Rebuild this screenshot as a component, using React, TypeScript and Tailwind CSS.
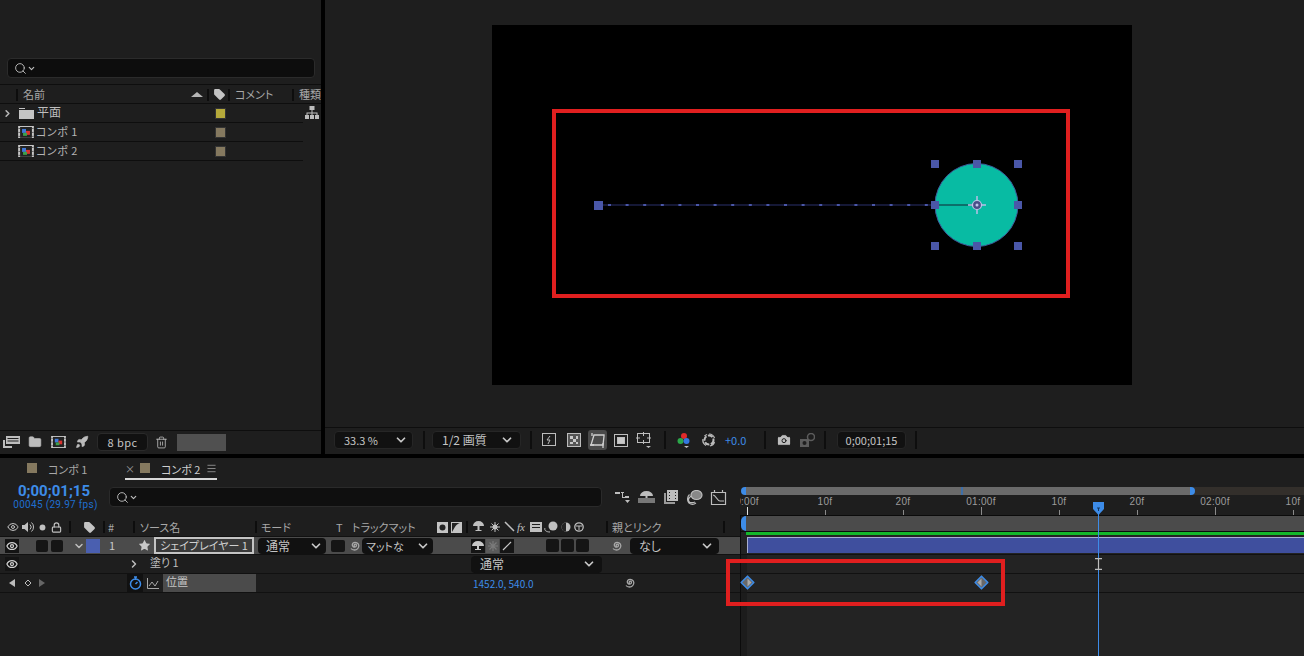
import React from 'react';
import { ChevronDown, ChevronRight, Search, Star, Trash2, Folder, Rocket, Camera, Eye, Lock, Tag, Circle, Menu } from 'lucide-react';

const FONT = '"Noto Sans CJK JP", "Noto Sans", sans-serif';

const Sep = ({ className = '' }: { className?: string }) => (
  <div className={`w-[2px] h-[12px] bg-[#0d0d0d] shrink-0 ${className}`} />
);

const CompIcon = ({ size = 16 }: { size?: number }) => (
  <svg width={size} height={size * 0.8} viewBox="0 0 16 13" className="shrink-0">
    <rect width="16" height="13" fill="#c8c8c8" />
    <rect x="2" y="1" width="12" height="11" fill="#222" />
    <rect x="0.5" y="2" width="1" height="1" fill="#222" />
    <rect x="0.5" y="6" width="1" height="1" fill="#222" />
    <rect x="0.5" y="10" width="1" height="1" fill="#222" />
    <rect x="14.5" y="2" width="1" height="1" fill="#222" />
    <rect x="14.5" y="6" width="1" height="1" fill="#222" />
    <rect x="14.5" y="10" width="1" height="1" fill="#222" />
    <rect x="4" y="3" width="4" height="4" fill="#3f78d8" />
    <rect x="8" y="5" width="4" height="4" fill="#d8322e" />
    <rect x="5" y="7" width="4" height="3" fill="#3fa04a" />
  </svg>
);

const Spiral = ({ className = '' }: { className?: string }) => (
  <svg width="14" height="14" viewBox="0 0 14 14" fill="none" stroke="#a8a8a8" strokeWidth="1.3" className={`shrink-0 ${className}`}>
    <path d="M7 7.5a1.2 1.2 0 1 1 1.5-1.2c0 1.6-2 2.4-3.3 1.5C3.8 6.800 4 4.500 5.800 3.700 7.800 2.900 10.500 4 10.800 6.300c.3 2.600-1.800 4.700-4.300 4.700-1.500 0-2.800-.5-3.500-1.500" />
  </svg>
);

const Dropdown = ({ label, className = '', textClass = '' }: { label: string; className?: string; textClass?: string }) => (
  <div className={`flex items-center justify-between bg-[#111111] rounded-[4px] shrink-0 ${className}`}>
    <span className={`text-[12px] leading-[14px] text-[#c4c4c4] whitespace-nowrap ${textClass}`}>{label}</span>
    <ChevronDown size={14} strokeWidth={3} className="text-[#c8c8c8] shrink-0" />
  </div>
);

const ToolDivider = () => <div className="w-[2px] h-[18px] bg-[#0e0e0e] shrink-0" />;

const FlatSquare = ({ color, className = '' }: { color: string; className?: string }) => (
  <div className={`w-[11px] h-[11px] border border-[#333] shrink-0 ${className}`} style={{ backgroundColor: color }} />
);

const ProjectRow = ({ name, color, folder }: { name: string; color: string; folder?: boolean }) => (
  <div className="relative flex items-center h-[19px] w-[303px] border-b border-[#0e0e0e]">
    {folder ? (
      <>
        <ChevronRight size={11} strokeWidth={3.5} className="text-[#b5b5b5] ml-[2px] shrink-0" />
        <svg width="15" height="11" viewBox="0 0 15 11" className="ml-[6px] shrink-0">
          <path d="M0 0h6v1H0zM0 2h15v9H0z" fill="#c4c4c4" />
        </svg>
        <span className="ml-[3px] mb-[2px] text-[12px] leading-[14px] text-[#bdbdbd]">{name}</span>
      </>
    ) : (
      <>
        <div className="ml-[18px] shrink-0"><CompIcon /></div>
        <span className="ml-[2px] mb-[2px] text-[11px] leading-[14px] text-[#b5b5b5] tracking-[0.5px]">{name}</span>
      </>
    )}
    <FlatSquare color={color} className="absolute left-[215px] top-[4px]" />
  </div>
);

const ProjectPanel = () => (
  <div className="w-[321px] shrink-0 bg-[#1e1e1e] flex flex-col h-full">
    <div className="mt-[58px] mx-[7px] w-[308px] h-[20px] bg-[#0d0d0d] rounded-[4px] border border-[#2b2b2b] flex items-center pl-[6px] text-[#c0c0c0]">
      <Search size={13} strokeWidth={1.700} />
      <ChevronDown size={9} strokeWidth={3} />
    </div>
    <div className="mt-[6px] border-t border-[#0e0e0e] border-b h-[20px] flex items-center text-[11px] text-[#a8a8a8] overflow-hidden w-[321px] pt-[1px]">
      <Sep className="ml-[16px]" />
      <span className="ml-[5px] w-[171px]">名前</span>
      <svg width="12" height="5" viewBox="0 0 12 5" className="shrink-0"><path d="M6 0l6 5H0z" fill="#b5b5b5" /></svg>
      <Sep className="ml-[4px]" />
      <Tag size={13} strokeWidth={0} fill="#c4c4c4" className="ml-[4px] shrink-0" />
      <Sep className="ml-[2px]" />
      <span className="ml-[5px] w-[58px] whitespace-nowrap">コメント</span>
      <Sep />
      <span className="ml-[5px] whitespace-nowrap">種類</span>
    </div>
    <div className="relative">
      <ProjectRow name="平面" color="#b5a93a" folder />
      <ProjectRow name="コンポ 1" color="#85795f" />
      <ProjectRow name="コンポ 2" color="#85795f" />
      <svg width="14" height="13" viewBox="0 0 14 13" className="absolute left-[305px] top-[2px]" fill="#bdbdbd">
        <rect x="4.500" y="0" width="5" height="4" />
        <rect x="0" y="9" width="4" height="4" />
        <rect x="5" y="9" width="4" height="4" />
        <rect x="10" y="9" width="4" height="4" />
        <path d="M6.500 4h1v2.500H12.500V9h-1V7.500H7.500V9h-1V7.500H2.500V9h-1V6.500H6.500z" />
      </svg>
    </div>
    <div className="mt-auto mb-[2px] h-[22px] flex items-center border-t border-[#0e0e0e] text-[#c0c0c0] pt-[1px]">
      <svg width="17" height="12" viewBox="0 0 17 12" className="ml-[3px] shrink-0" fill="#bdbdbd">
        <path d="M3 0h14v8H3zM4.500 2v1h11V2zM4.500 4.500v1h11v-1zM0 4h2v6h7v2H0z" fillRule="evenodd" />
      </svg>
      <Folder size={14} fill="#bdbdbd" strokeWidth={1} className="ml-[8px]" />
      <div className="ml-[9px]"><CompIcon size={15} /></div>
      <Rocket size={14} fill="#bdbdbd" strokeWidth={1} className="ml-[9px]" />
      <div className="ml-[8px] w-[51px] h-[18px] bg-[#111111] border border-[#2a2a2a] rounded-[4px] flex items-center justify-center text-[11px] text-[#c4c4c4] tracking-[0.4px]">8 bpc</div>
      <Trash2 size={13} strokeWidth={1.5} className="ml-[7px]" />
      <div className="ml-[9px] w-[49px] h-[17px] bg-[#505050]" />
    </div>
  </div>
);

const CompCanvas = () => (
  <div className="relative w-[640px] h-[360px] bg-black">
    <svg width="640" height="360" viewBox="0 0 640 360" className="absolute inset-0">
      <line x1="106" y1="180" x2="443" y2="180" stroke="#1d2148" strokeWidth="1.500" />
      {Array.from({ length: 21 }, (_, i) => (
        <rect key={i} x={116 + i * 17.6} y={179} width="3" height="2" fill="#4a57a8" />
      ))}
      <circle cx="484.500" cy="180" r="41.500" fill="#08bba3" stroke="#3d5a9a" strokeWidth="1" />
      <line x1="443" y1="180" x2="485" y2="180" stroke="#0c6f6a" strokeWidth="2" />
      {[
        [443, 139], [485, 139], [526, 139],
        [443, 180], [526, 180],
        [443, 221], [485, 221], [526, 221],
      ].map(([x, y]) => (
        <rect key={`${x}-${y}`} x={x - 4} y={y - 4} width="8" height="8" fill="#4a57a8" />
      ))}
      <rect x="102" y="176" width="9" height="9" fill="#4a57a8" />
      <path d="M485 171v18M476 180h18" stroke="#b8c0e8" strokeWidth="1.500" />
      <circle cx="485" cy="180" r="4.500" fill="#4a4f88" stroke="#c0c6ea" strokeWidth="1.200" />
      <circle cx="485" cy="180" r="1.500" fill="#c0c6ea" />
    </svg>
    <div className="absolute left-[60px] top-[84px] w-[518px] h-[189px] border-[4px] border-[#e01f1f]" />
  </div>
);

const ViewerToolbar = () => (
  <div className="h-[25px] flex items-center pl-[9px] border-t border-[#0e0e0e] text-[#c0c0c0] mb-[2px]">
    <Dropdown label="33.3 %" className="w-[79px] h-[18px] pl-[9px] pr-[4px] border border-[#262626]" textClass="text-[#a9c4e4] !text-[11px]" />
    <div className="ml-[10px]"><ToolDivider /></div>
    <Dropdown label="1/2 画質" className="ml-[7px] w-[89px] h-[18px] pl-[9px] pr-[6px] border border-[#262626]" />
    <div className="ml-[9px]"><ToolDivider /></div>
    <svg width="14" height="14" viewBox="0 0 14 14" className="ml-[10px] shrink-0" fill="none" stroke="#bdbdbd">
      <rect x="0.500" y="0.500" width="13" height="12" />
      <path d="M8 3L5 7h3l-2 4" />
    </svg>
    <svg width="14" height="14" viewBox="0 0 14 14" className="ml-[11px] shrink-0" stroke="#bdbdbd">
      <rect x="0.500" y="0.500" width="13" height="13" fill="#555" />
      <path d="M3 3h3v3H3zM9 3h2v3H9zM6 6h3v3H6zM3 9h3v2H3zM9 9h2v2H9z" fill="#c8c8c8" stroke="none" />
    </svg>
    <div className="ml-[7px] w-[19px] h-[20px] bg-[#4a4a4a] rounded-[3px] flex items-center justify-center">
      <svg width="15" height="15" viewBox="0 0 15 15" fill="none" stroke="#d0d0d0" strokeWidth="1.300">
        <path d="M4 2h10v1l-1 9H1z" />
        <path d="M2 0v3M0 12h4M13 10v5" />
      </svg>
    </div>
    <svg width="14" height="13" viewBox="0 0 14 13" className="ml-[7px] shrink-0" fill="none" stroke="#bdbdbd">
      <rect x="0.500" y="0.500" width="13" height="12" />
      <rect x="3.500" y="3.500" width="7" height="6" fill="#c8c8c8" />
    </svg>
    <svg width="16" height="16" viewBox="0 0 16 16" className="ml-[8px] shrink-0" fill="none" stroke="#bdbdbd">
      <rect x="1.500" y="1.500" width="12" height="9" />
      <path d="M7.500 0v4M7.500 8v4M0 6h4M11 6h4" />
      <path d="M10 14h5l-2.500 2z" fill="#bdbdbd" stroke="none" />
    </svg>
    <div className="ml-[12px]"><ToolDivider /></div>
    <svg width="14" height="16" viewBox="0 0 14 16" className="ml-[11px] shrink-0">
      <circle cx="7" cy="4" r="3" fill="#e02a2a" />
      <circle cx="3.500" cy="9" r="3" fill="#2ba84a" />
      <circle cx="9.500" cy="9" r="3" fill="#3378e0" />
      <path d="M7 14h5l-2.500 2z" fill="#bdbdbd" />
    </svg>
    <svg width="14" height="14" viewBox="0 0 14 14" className="ml-[11px] shrink-0" fill="none" stroke="#bdbdbd" strokeWidth="2">
      <circle cx="7" cy="7" r="4.500" strokeDasharray="5 1.500" />
      <path d="M7 1a6 6 0 0 1 5.500 4M12.500 9A6 6 0 0 1 8 13M4 12.500A6 6 0 0 1 1 6M2.500 3A6 6 0 0 1 5 1.500" strokeWidth="1.200" />
    </svg>
    <span className="ml-[9px] text-[11px] leading-none text-[#3d8ce8] w-[22px]">+0.0</span>
    <div className="ml-[17px]"><ToolDivider /></div>
    <Camera size={16} fill="#bdbdbd" stroke="#1e1e1e" strokeWidth={1.500} className="ml-[10px] shrink-0" />
    <svg width="15" height="14" viewBox="0 0 15 14" className="ml-[8px] shrink-0" fill="#5c5c5c">
      <path d="M0 6h9v8H0z" />
      <circle cx="4.500" cy="10" r="2" fill="#1e1e1e" />
      <circle cx="11" cy="4" r="3.500" fill="none" stroke="#5c5c5c" strokeWidth="1.500" />
    </svg>
    <div className="ml-[9px]"><ToolDivider /></div>
    <div className="ml-[11px] w-[69px] h-[18px] bg-[#111111] border border-[#262626] rounded-[4px] flex items-center justify-center text-[11px] leading-none text-[#c4c4c4]">0;00;01;15</div>
    <div className="ml-[9px]"><ToolDivider /></div>
  </div>
);

const Viewer = () => (
  <div className="flex-1 bg-[#1e1e1e] flex flex-col h-full">
    <div className="flex-1 pt-[25px] pl-[167px]">
      <CompCanvas />
    </div>
    <ViewerToolbar />
  </div>
);

const Tabs = () => (
  <div className="h-[25px] flex items-start text-[11px] leading-[14px] text-[#a8a8a8]">
    <div className="ml-[27px] mt-[5px] w-[10px] h-[10px] bg-[#85795f] shrink-0" />
    <span className="ml-[11px] mt-[4px] w-[37px] shrink-0 whitespace-nowrap">コンポ 1</span>
    <div className="ml-[40px] w-[92px] h-[22px] border-b-2 border-[#d8d8d8] flex items-start shrink-0">
      <span className="mt-[4px] w-[15px] shrink-0 text-[10px] text-[#9a9a9a]">×</span>
      <div className="mt-[5px] w-[10px] h-[10px] bg-[#85795f] shrink-0" />
      <span className="ml-[11px] mt-[4px] w-[37px] shrink-0 text-[#cfcfcf] whitespace-nowrap">コンポ 2</span>
      <Menu size={11} strokeWidth={1.500} className="ml-[8px] mt-[5px] text-[#b5b5b5] shrink-0" />
    </div>
  </div>
);

const TimeSearch = () => (
  <div className="h-[30px] flex items-start">
    <div className="w-[109px] flex flex-col items-center font-['Roboto']">
      <span className="text-[15px] leading-[16px] font-bold text-[#3d8ce8] ml-[-1px]">0;00;01;15</span>
      <span className="text-[10px] leading-[11px] text-[#1f6fd0] tracking-[0.3px] whitespace-nowrap ml-[2px]">00045 (29.97 fps)</span>
    </div>
    <div className="mt-[4px] w-[493px] h-[20px] bg-[#0f0f0f] border border-[#2a2a2a] rounded-[4px] flex items-center pl-[6px] text-[#c0c0c0]">
      <Search size={13} strokeWidth={1.700} />
      <ChevronDown size={9} strokeWidth={3} />
    </div>
    <svg width="15" height="12" viewBox="0 0 15 12" className="ml-[13px] mt-[8px] shrink-0" fill="#bdbdbd">
      <path d="M0 1h5v2H0zM6 1h3v1H8v4h2V5h4v2h-4V7H7V2H6zM10 9h5l-2.500 3z" />
    </svg>
    <svg width="17" height="12" viewBox="0 0 17 12" className="ml-[8px] mt-[8px] shrink-0" fill="#bdbdbd">
      <path d="M2 5a6.500 5 0 0 1 13 0H9.500v2h-2V5z" />
      <rect x="0" y="7" width="17" height="5" fill="#777" />
    </svg>
    <svg width="15" height="15" viewBox="0 0 15 15" className="ml-[8px] mt-[7px] shrink-0" fill="#bdbdbd">
      <path d="M4 0h11v11H4zM6 2v1h1V2zM6 5v1h1V5zM6 8v1h1V8zM12 2v1h1V2zM12 5v1h1V5zM12 8v1h1V8z" fillRule="evenodd" />
      <path d="M1 3h2v9h9v2H1z" fill="#9a9a9a" />
    </svg>
    <svg width="16" height="15" viewBox="0 0 16 15" className="ml-[9px] mt-[7px] shrink-0" fill="none" stroke="#bdbdbd" strokeWidth="1.200">
      <ellipse cx="9.500" cy="5" rx="5.500" ry="4.500" fill="#888" />
      <path d="M4 6c-2.500 2-3 4-2 5.500 1 1.500 4 1.500 6 .5M2.500 4.500C0 7 0 11 2 13c2 1.500 5 1.500 7 0" />
    </svg>
    <svg width="17" height="15" viewBox="0 0 17 15" className="ml-[7px] mt-[7px] shrink-0" fill="none" stroke="#bdbdbd" strokeWidth="1.200">
      <path d="M1.500 2.500h14v12h-14zM4.500 0v3M12.500 0v3" />
      <path d="M3 5c3 0 4 6 7 6h4" />
    </svg>
  </div>
);

const Ruler = () => {
  const labels = [
    { x: 0, t: '0:00f' }, { x: 78, t: '10f' }, { x: 156, t: '20f' }, { x: 234, t: '01:00f' },
    { x: 312, t: '10f' }, { x: 390, t: '20f' }, { x: 468, t: '02:00f' }, { x: 546, t: '10f' },
  ];
  return (
    <svg width="564" height="20" viewBox="0 0 564 20" className="block">
      {labels.map((l, i) => (
        <g key={l.x}>
          <text x={l.x + 7} y="10" textAnchor="middle" fontSize="10" fill="#9c9c9c" fontFamily='"Liberation Sans", sans-serif' letterSpacing="0.3">{l.t}</text>
          <rect x={l.x + 7} y={i === 0 || i % 3 === 0 ? 12 : 15} width="1" height={i === 0 || i % 3 === 0 ? 8 : 5} fill={i === 0 ? '#e0e0e0' : '#8a8a8a'} />
        </g>
      ))}
    </svg>
  );
};

const Diamond = ({ flip, className = '' }: { flip?: boolean; className?: string }) => (
  <svg width="15" height="15" viewBox="0 0 15 15" className={`absolute top-[1px] z-10 ${className}`}>
    <path d="M7.500 1.200l6.300 6.300-6.300 6.300-6.300-6.300z" fill="#686868" stroke="#3d8ce8" strokeWidth="1.600" strokeLinejoin="round" />
    {flip ? <path d="M7.500 3.500l-4 4 4 4z" fill="#a8a8a8" /> : <path d="M7.500 3.500l4 4-4 4z" fill="#a8a8a8" />}
  </svg>
);

const TimelineRight = () => (
  <div className="relative flex-1 h-full overflow-hidden bg-[#232323] flex flex-col">
    <div className="h-[29px] bg-[#1e1e1e] shrink-0" />
    <div className="relative h-[8px] bg-[#1e1e1e] flex pl-[6px] shrink-0">
      <div className="w-[444px] bg-[#6a6a6a]" />
      <div className="flex-1 bg-[#332f2b]" />
      <div className="absolute left-[1px] top-0 w-[5px] h-[8px] bg-[#3d8ce8] rounded-l-full" />
      <div className="absolute left-[450px] top-0 w-[5px] h-[8px] bg-[#3d8ce8] rounded-r-full" />
      <div className="absolute left-[221px] top-0 w-[2px] h-[8px] bg-[#3f6fa8]" />
    </div>
    <div className="h-[21px] bg-[#1e1e1e] border-b border-[#0b0b0b] shrink-0">
      <Ruler />
    </div>
    <div className="relative h-[15px] bg-[#1e1e1e] pl-[6px] shrink-0">
      <div className="h-full bg-[#4b4b4b]" />
      <div className="absolute left-[1px] top-0 w-[5px] h-[15px] bg-[#3d8ce8] rounded-l-full" />
    </div>
    <div className="h-[1px] bg-[#0b0b0b] shrink-0" />
    <div className="h-[3px] ml-[6px] bg-[#13b82a] shrink-0" />
    <div className="h-[20px] border-b border-[#111] pl-[7px] pt-[2px] shrink-0">
      <div className="h-[16px] bg-[#3f4f9e] border-t border-l border-[#a8aed0]" />
    </div>
    <div className="h-[19px] border-b border-[#111] shrink-0" />
    <div className="relative h-[19px] border-b border-[#111] shrink-0">
      <Diamond className="left-[0px]" />
      <Diamond flip className="left-[234px]" />
    </div>
    <div className="absolute left-0 top-[58px] bottom-0 w-[1px] bg-[#0b0b0b]" />
    <div className="absolute left-[1px] top-[97px] bottom-0 w-[6px] bg-[#1a1a1a]/70" />
    <div className="absolute left-[358px] top-[52px] bottom-0 w-[1px] bg-[#3d8ce8]" />
    <svg width="11" height="13" viewBox="0 0 11 13" className="absolute left-[353px] top-[44px]">
      <path d="M0 0h11v7l-5.500 6L0 7z" fill="#3d8ce8" />
      <path d="M4 6h3M5.500 6v3" stroke="#12365f" />
    </svg>
    <svg width="7" height="12" viewBox="0 0 7 12" className="absolute left-[355px] top-[100px]" fill="none" stroke="#bdbdbd" strokeWidth="1.200">
      <path d="M0 .6h7M0 11.400h7M3.500 .6v10.800" />
    </svg>
  </div>
);

const HeaderCells = () => (
  <div className="h-[18px] flex items-center text-[11px] text-[#a8a8a8] whitespace-nowrap">
    <Eye size={12} strokeWidth={2} className="ml-[7px] shrink-0 text-[#c0c0c0]" />
    <svg width="12" height="12" viewBox="0 0 12 12" className="ml-[3px] shrink-0" fill="#c0c0c0">
      <path d="M0 4h2.500L6 1v10L2.500 8H0z" />
      <path d="M8 3.500a3.500 3.500 0 0 1 0 5M9.500 1.500a6 6 0 0 1 0 9" fill="none" stroke="#c0c0c0" />
    </svg>
    <Circle size={7} fill="#c0c0c0" strokeWidth={0} className="ml-[5px] shrink-0" />
    <Lock size={11} strokeWidth={2.500} className="ml-[5px] shrink-0 text-[#c0c0c0]" />
    <Sep className="ml-[7px]" />
    <Tag size={13} strokeWidth={0} fill="#c4c4c4" className="ml-[12px] shrink-0" />
    <Sep className="ml-[7px]" />
    <span className="ml-[3px] w-[25px]">#</span>
    <Sep />
    <span className="ml-[5px] w-[115px]">ソース名</span>
    <Sep />
    <span className="ml-[4px] w-[75px]">モード</span>
    <span className="w-[16px]">T</span>
    <span className="w-[85px]">トラックマット</span>
    <svg width="26" height="11" viewBox="0 0 26 11" className="shrink-0">
      <rect width="11" height="11" fill="#c4c4c4" />
      <circle cx="5.500" cy="5.500" r="3" fill="#222" />
      <rect x="14" width="11" height="11" fill="#c4c4c4" />
      <path d="M15 10V1h8c-4 1-5 4-8 9z" fill="#222" />
    </svg>
    <Sep className="ml-[3px]" />
    <svg width="116" height="12" viewBox="0 0 116 12" className="ml-[4px] shrink-0" fill="#c0c0c0">
      <path d="M1 5a5.500 5 0 0 1 11 0H7.500v4h2v1h-6V9h2V5z" />
      <circle cx="23" cy="6" r="2.500" />
      <path d="M23 1v10M18 6h10M19.500 2.500l7 7M26.500 2.500l-7 7" stroke="#c0c0c0" />
      <path d="M33 1l3 3M36 4l6 6" stroke="#c0c0c0" strokeWidth="1.500" />
      <text x="45" y="10" fontSize="11" fontStyle="italic" fontFamily='"Liberation Serif", serif'>fx</text>
      <path d="M58 1h12v10H58zM60 3v1h8V3zM60 6v1h8V6z" fillRule="evenodd" />
      <circle cx="81" cy="5" r="4.500" />
      <path d="M73 7c-1 2 1 4 5 4" stroke="#c0c0c0" fill="none" />
      <circle cx="94" cy="6" r="4.500" />
      <path d="M94 1.500a4.500 4.500 0 0 0 0 9z" fill="#222" />
      <circle cx="107" cy="6" r="4.200" fill="none" stroke="#c0c0c0" strokeWidth="1.300" />
      <path d="M104 5h6M107 5v4" stroke="#c0c0c0" />
    </svg>
    <Sep className="ml-[18px]" />
    <span className="ml-[4px] w-[111px]">親とリンク</span>
    <Sep />
  </div>
);

const BlackBox = ({ className = '' }: { className?: string }) => (
  <div className={`w-[12px] h-[12px] bg-[#151515] rounded-[2px] shrink-0 ${className}`} />
);

const EyeCell = () => (
  <div className="ml-[5px] w-[14px] h-[14px] bg-[#141414] flex items-center justify-center shrink-0">
    <Eye size={12} strokeWidth={2.500} className="text-[#d0d0d0]" />
  </div>
);

const LayerRow = () => (
  <div className="h-[19px] bg-[#4b4b4b] border-t border-b border-[#111] flex items-center text-[11px] text-[#c8c8c8] whitespace-nowrap">
    <EyeCell />
    <BlackBox className="ml-[17px]" />
    <BlackBox className="ml-[3px]" />
    <ChevronDown size={12} strokeWidth={3} className="ml-[10px] text-[#bdbdbd] shrink-0" />
    <div className="ml-[1px] w-[14px] h-[14px] bg-[#4a5fb0] shrink-0" />
    <span className="ml-[9px] w-[20px]">1</span>
    <Star size={13} fill="#c8c8c8" strokeWidth={0} className="ml-[9px] shrink-0" />
    <div className="ml-[3px] w-[100px] h-[17px] border-2 border-[#c4c4c4] bg-[#3a3a3a] text-[11px] leading-[13px] text-[#d0d0d0] text-center">シェイプレイヤー 1</div>
    <Dropdown label="通常" className="ml-[4px] w-[68px] h-[16px] pl-[8px] pr-[3px]" />
    <BlackBox className="ml-[5px] !w-[14px]" />
    <Spiral className="ml-[3px]" />
    <Dropdown label="マットな" className="ml-[0px] w-[71px] h-[16px] pl-[4px] pr-[3px]" textClass="!text-[11px]" />
    <div className="ml-[38px] w-[14px] h-[14px] bg-[#151515] flex items-center justify-center shrink-0">
      <svg width="12" height="10" viewBox="0 0 12 10" fill="#c8c8c8"><path d="M0 5a6 5 0 0 1 12 0H7v3h2v1H3V8h2V5z" /></svg>
    </div>
    <div className="w-[13px] h-[14px] ml-[1px] bg-[#5a5a5a] flex items-center justify-center shrink-0">
      <svg width="10" height="10" viewBox="0 0 10 10" stroke="#7a7a7a" strokeWidth="1.200"><path d="M5 0v10M0 5h10M1.500 1.500l7 7M8.500 1.500l-7 7" /></svg>
    </div>
    <div className="ml-[1px] w-[14px] h-[14px] bg-[#151515] flex items-center justify-center shrink-0">
      <svg width="10" height="10" viewBox="0 0 10 10" stroke="#c8c8c8" strokeWidth="1.200"><path d="M9 1L1 9" /></svg>
    </div>
    <BlackBox className="ml-[32px] !w-[13px] !h-[13px]" />
    <BlackBox className="ml-[2px] !w-[13px] !h-[13px]" />
    <BlackBox className="ml-[2px] !w-[13px] !h-[13px]" />
    <Spiral className="ml-[21px]" />
    <Dropdown label="なし" className="ml-[6px] w-[89px] h-[16px] pl-[9px] pr-[5px]" />
  </div>
);

const ContentsRow = () => (
  <div className="h-[19px] border-b border-[#111] flex items-center text-[11px] text-[#bdbdbd] whitespace-nowrap">
    <EyeCell />
    <ChevronRight size={12} strokeWidth={3} className="ml-[109px] text-[#bdbdbd] shrink-0" />
    <span className="ml-[10px] w-[321px] mb-[3px]">塗り 1</span>
    <Dropdown label="通常" className="w-[131px] h-[17px] pl-[9px] pr-[6px]" />
  </div>
);

const PositionRow = () => (
  <div className="h-[19px] border-b border-[#111] flex items-center text-[11px] text-[#bdbdbd] whitespace-nowrap">
    <svg width="36" height="9" viewBox="0 0 36 9" className="ml-[9px] shrink-0">
      <path d="M6 0v8L0 4z" fill="#bdbdbd" />
      <path d="M19 1l3 3-3 3-3-3z" fill="none" stroke="#bdbdbd" />
      <path d="M30 0v8l6-4z" fill="#666" />
    </svg>
    <div className="ml-[82px] w-[16px] h-[18px] bg-[#111] flex items-center justify-center shrink-0">
      <svg width="13" height="14" viewBox="0 0 13 14" fill="none" stroke="#3d8ce8" strokeWidth="1.500">
        <circle cx="6.500" cy="8" r="5" />
        <path d="M5 1h3M6.500 1v3M6.500 8l2-2" />
      </svg>
    </div>
    <svg width="12" height="11" viewBox="0 0 12 11" className="ml-[4px] shrink-0" fill="none" stroke="#a8a8a8">
      <path d="M.5 0v10.500H12" />
      <path d="M2 8l3-4 3 4 3-5" />
    </svg>
    <div className="ml-[4px] w-[93px] h-[18px] bg-[#4b4b4b] text-[11px] leading-[14px] pl-[3px] text-[#c4c4c4]">位置</div>
    <span className="ml-[217px] w-[150px] text-[10px] text-[#3d8ce8]">1452.0, 540.0</span>
    <Spiral />
  </div>
);

const Timeline = () => (
  <div className="flex-1 bg-[#1e1e1e] flex min-h-0">
    <div className="w-[740px] shrink-0 flex flex-col">
      <Tabs />
      <TimeSearch />
      <div className="h-[5px]" />
      <HeaderCells />
      <LayerRow />
      <ContentsRow />
      <PositionRow />
    </div>
    <TimelineRight />
  </div>
);

export default function App() {
  return (
    <div className="relative w-[1304px] h-[656px] bg-black flex flex-col gap-[4px] overflow-hidden [font-feature-settings:'palt']" style={{ fontFamily: FONT }}>
      <div className="h-[454px] flex gap-[4px] shrink-0">
        <ProjectPanel />
        <Viewer />
      </div>
      <Timeline />
      {/* highlight drawn over the timeline */}
      <div className="absolute left-[726px] top-[559px] w-[279px] h-[47px] border-[4px] border-[#e01f1f] z-20" />
    </div>
  );
}
